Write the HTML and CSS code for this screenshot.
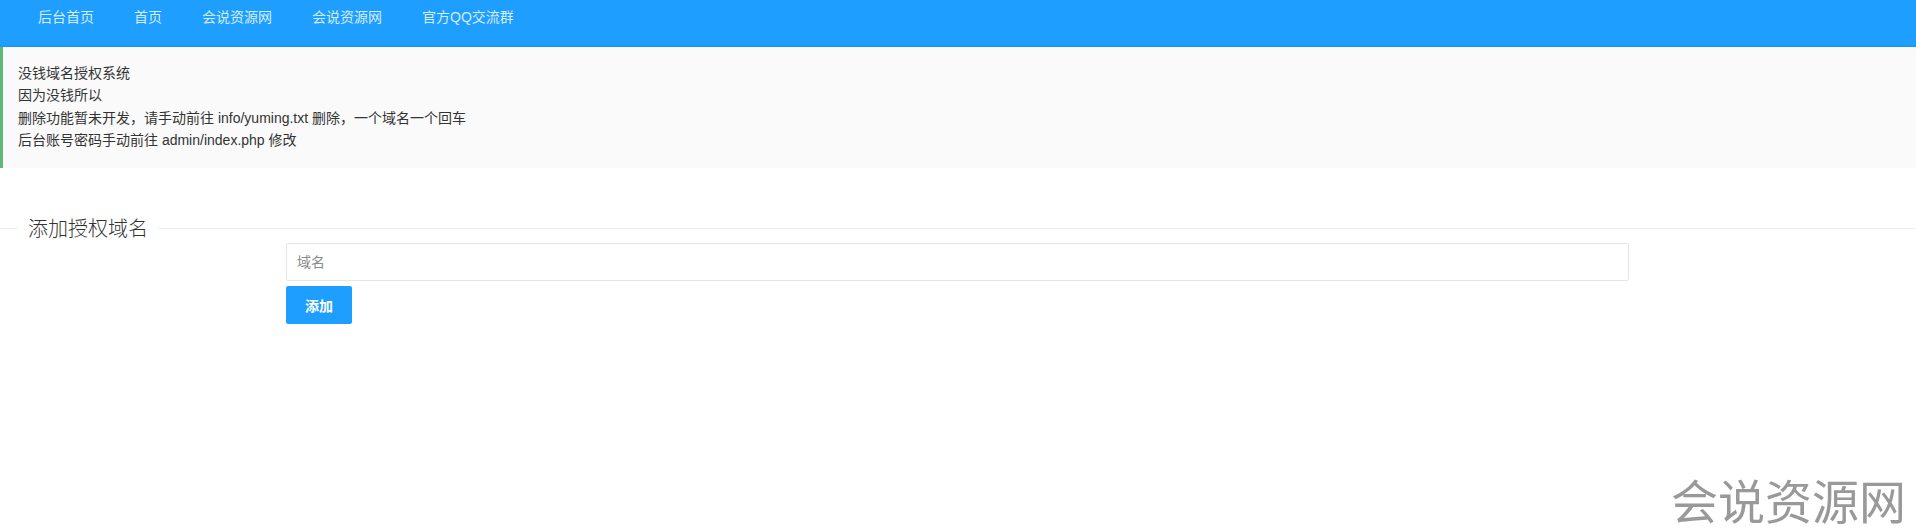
FILE: index.html
```html
<!DOCTYPE html>
<html lang="zh-CN">
<head>
<meta charset="utf-8">
<title>没钱域名授权系统</title>
<link rel="stylesheet" href="styles.css">
</head>
<body>
<ul class="nav">
  <li class="nav-item">后台首页</li>
  <li class="nav-item">首页</li>
  <li class="nav-item">会说资源网</li>
  <li class="nav-item">会说资源网</li>
  <li class="nav-item">官方QQ交流群</li>
</ul>
<blockquote class="quote">
  <div>没钱域名授权系统</div>
  <div>因为没钱所以</div>
  <div>删除功能暂未开发，请手动前往 info/yuming.txt 删除，一个域名一个回车</div>
  <div>后台账号密码手动前往 admin/index.php 修改</div>
</blockquote>
<fieldset class="field-title">
  <legend>添加授权域名</legend>
</fieldset>
<form class="form">
  <input class="input" type="text" placeholder="域名">
  <button class="btn" type="button">添加</button>
</form>
<div class="watermark">会说资源网</div>
</body>
</html>
```
FILE: styles.css
```css
html, body {
  margin: 0;
  padding: 0;
  background: #fff;
}
body {
  font-family: "Liberation Sans", "Noto Sans CJK SC", sans-serif;
  font-size: 14px;
  color: #333;
}
.nav {
  list-style: none;
  margin: 0;
  padding: 0 0 0 18px;
  height: 47px;
  background: #1E9FFF;
  display: flex;
  box-shadow: inset 0 -2px 0 rgba(0, 0, 0, 0.04);
}
.nav-item {
  padding: 0 20px;
  line-height: 34px;
  color: rgba(255, 255, 255, 0.82);
  font-size: 14px;
}
.quote {
  margin: 0;
  padding: 15px 15px 16px 15px;
  border-left: 3px solid #5FB878;
  background: #fafafa;
  line-height: 22.4px;
  color: #333;
}
.field-title {
  margin: 47px 0 0 0;
  padding: 0;
  border: 0;
  border-top: 1px solid #eee;
  min-inline-size: auto;
}
.field-title legend {
  margin-left: 18px;
  padding: 0 10px;
  font-size: 20px;
  font-weight: 300;
  line-height: 28px;
  color: #333;
}
.form {
  margin: 0 0 0 286px;
  width: 1343px;
  display: flex;
  flex-direction: column;
  align-items: flex-start;
}
.input {
  box-sizing: border-box;
  width: 100%;
  height: 38px;
  border: 1px solid #e6e6e6;
  border-radius: 2px;
  padding: 0 10px;
  font-family: inherit;
  font-size: 14px;
  color: #333;
  background: #fff;
  outline: none;
}
.input::placeholder {
  color: #8a8a8a;
}
.btn {
  margin-top: 5px;
  height: 38px;
  padding: 0 19px;
  border: 0;
  border-radius: 2px;
  background: #1E9FFF;
  color: #fff;
  font-family: inherit;
  font-size: 14px;
  font-weight: bold;
}
.watermark {
  position: fixed;
  right: 10px;
  bottom: 6px;
  font-family: "Noto Sans CJK SC", sans-serif;
  font-size: 47px;
  line-height: 52px;
  color: #999;
  letter-spacing: 0;
}
```
